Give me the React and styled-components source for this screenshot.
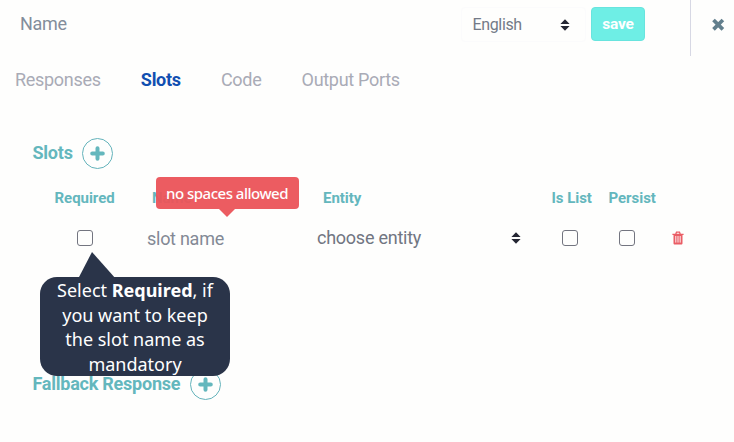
import React from 'react';
import styled, { createGlobalStyle } from 'styled-components';

const GlobalStyle = createGlobalStyle`
  * { box-sizing: border-box; }
  body {
    margin: 0;
    background: #fefefd;
    font-family: Roboto, "Liberation Sans", sans-serif;
    overflow: hidden;
  }
`;

const Page = styled.div`
  width: 734px;
  height: 442px;
  display: flex;
  flex-direction: column;
  background: #fefefd;
`;

const Header = styled.header`
  height: 56px;
  display: flex;
  align-items: flex-start;
  padding-left: 20px;
`;

const NameField = styled.div`
  flex: 1;
  line-height: 48px;
  font-size: 18px;
  letter-spacing: -0.3px;
  color: #838d9b;
`;

const LanguageSelect = styled.div`
  width: 125px;
  height: 35px;
  margin-top: 7px;
  padding: 0 15px 0 10.5px;
  display: flex;
  align-items: center;
  justify-content: space-between;
  border: 1px solid #fbfbfc;
  border-radius: 4px;
  font-size: 16px;
  letter-spacing: -0.35px;
  color: #737a87;

  span { margin-top: -1px; }
`;

const SaveButton = styled.button`
  width: 54px;
  height: 34px;
  margin: 7px 45px 0 5px;
  padding: 0;
  border: 1px solid #68e4de;
  border-radius: 4px;
  background: #6eeee5;
  color: #fff;
  font: 700 15.5px Roboto, sans-serif;
  letter-spacing: -0.2px;
`;

const CloseArea = styled.div`
  width: 44px;
  height: 56px;
  padding: 17px 0 0 20px;
  border-left: 1px solid #d7d8e4;
`;

const Tabs = styled.nav`
  height: 48px;
  padding-left: 15px;
  display: flex;
  align-items: center;
  gap: 40.2px;
`;

const Tab = styled.span`
  font-size: 18px;
  letter-spacing: -0.3px;
  line-height: 24px;
  font-weight: ${p => (p.$active ? 700 : 400)};
  color: ${p => (p.$active ? '#114fb1' : '#a9abb6')};
`;

const Section = styled.section`
  padding-left: 32.5px;
  margin-top: ${p => p.$top}px;
`;

const SectionTitle = styled.h2`
  margin: 0;
  height: 31px;
  display: flex;
  align-items: center;
  gap: 9.8px;
  font-size: 18px;
  letter-spacing: -0.24px;
  line-height: 28px;
  font-weight: 700;
  color: #64b7bd;

  span { padding-bottom: 1px; }
`;

const AddButton = styled.button`
  width: 31px;
  height: 31px;
  padding: 0;
  display: grid;
  place-items: center;
  border: 1px solid #64b3bb;
  border-radius: 50%;
  background: transparent;
  color: #64b7bd;
`;

const Row = styled.div`
  display: grid;
  align-items: center;
`;

const LabelRow = styled(Row)`
  grid-template-columns: 97.5px 171px 228.5px 57px 1fr;
  height: 20px;
  margin-top: 19px;
  padding-left: 22px;
`;

const FieldRow = styled(Row)`
  grid-template-columns: 70px 170px 245px 57px 52.5px 1fr;
  height: 24px;
  margin-top: 17px;
  padding-left: 44.5px;
`;

const ColumnLabel = styled.div`
  position: relative;
  font-size: 15px;
  letter-spacing: -0.04px;
  line-height: 20px;
  font-weight: 700;
  color: #64b7bd;
`;

const Checkbox = styled.span`
  width: 16px;
  height: 16px;
  position: relative;
  border: 1px solid #737580;
  border-radius: 3px;
`;

const SlotName = styled.div`
  font-size: 18px;
  letter-spacing: -0.27px;
  line-height: 24px;
  margin-top: 2px;
  color: #838995;
`;

const EntitySelect = styled.div`
  width: 204px;
  display: flex;
  align-items: center;
  justify-content: space-between;
  font-size: 18px;
  letter-spacing: -0.25px;
  line-height: 24px;
  color: #717682;
`;

const ErrorTip = styled.div`
  position: absolute;
  left: 3.5px;
  top: -11px;
  width: 143px;
  height: 32px;
  border-radius: 4px;
  background: rgba(235, 83, 88, 0.95);
  color: #fff;
  font: 500 15px/33px "Noto Sans", sans-serif;
  letter-spacing: -0.5px;
  text-align: center;
  white-space: nowrap;

  &::after {
    content: '';
    position: absolute;
    left: 63px;
    top: 32px;
    border: 8px solid transparent;
    border-top-color: rgba(235, 83, 88, 0.95);
    border-bottom: 0;
  }
`;

const Callout = styled.aside`
  position: absolute;
  z-index: 2;
  left: -38px;
  top: 46px;
  width: 190px;
  height: 99px;
  padding-top: 1px;
  border-radius: 17px;
  background: #2a3449;
  color: #fff;
  font: 400 18px/24.6px "Noto Sans", sans-serif;
  text-align: center;
  white-space: nowrap;

  p { margin: 0; }

  svg {
    position: absolute;
    left: 38px;
    top: -25px;
  }
`;

const SortIcon = () => (
  <svg width="10" height="12" viewBox="0 0 10 12" fill="#242633">
    <path d="M5 .3 9.6 5H.4zM.4 7h9.2L5 11.7z" />
  </svg>
);

const PlusIcon = () => (
  <svg width="15" height="15" viewBox="0 0 15 15" fill="none" stroke="currentColor" strokeWidth="4" strokeLinecap="round">
    <path d="M7.5 2.2v10.6M2.2 7.5h10.6" />
  </svg>
);

const CloseIcon = () => (
  <svg width="14" height="14" viewBox="0 0 14 14" fill="none" stroke="#627f8d" strokeWidth="3.7" strokeLinecap="square">
    <path d="M3.8 3.3l6.8 6.8M10.6 3.3l-6.8 6.8" />
  </svg>
);

const TrashIcon = () => (
  <svg width="12" height="14" viewBox="0 0 12 14">
    <path d="M1.5 3.2h9v9c0 .8-.5 1.3-1.3 1.3H2.8c-.8 0-1.3-.5-1.3-1.3z" fill="#ea5d65" />
    <path d="M.4 3.3h11.2M3.8 3l.7-1.9h3L8.2 3" fill="none" stroke="#ea5d65" strokeWidth="1.3" />
    <path d="M3.8 5v6.6M6 5v6.6M8.2 5v6.6" stroke="#fff" strokeWidth=".9" />
  </svg>
);

export default function App() {
  return (
    <>
      <GlobalStyle />
      <Page>
        <Header>
          <NameField>Name</NameField>
          <LanguageSelect><span>English</span><SortIcon /></LanguageSelect>
          <SaveButton>save</SaveButton>
          <CloseArea><CloseIcon /></CloseArea>
        </Header>
        <Tabs>
          <Tab>Responses</Tab>
          <Tab $active>Slots</Tab>
          <Tab>Code</Tab>
          <Tab>Output Ports</Tab>
        </Tabs>
        <Section $top={34}>
          <SectionTitle>
            <span>Slots</span>
            <AddButton aria-label="Add slot"><PlusIcon /></AddButton>
          </SectionTitle>
          <LabelRow>
            <ColumnLabel>Required</ColumnLabel>
            <ColumnLabel>
              Name
              <ErrorTip>no spaces allowed</ErrorTip>
            </ColumnLabel>
            <ColumnLabel>Entity</ColumnLabel>
            <ColumnLabel>Is List</ColumnLabel>
            <ColumnLabel>Persist</ColumnLabel>
          </LabelRow>
          <FieldRow>
            <Checkbox>
              <Callout>
                <svg width="40" height="27" viewBox="0 0 40 27" fill="#2a3449">
                  <path d="M14 0 38 27H0z" />
                </svg>
                <p>Select <b>Required</b>, if</p>
                <p>you want to keep</p>
                <p>the slot name as</p>
                <p>mandatory</p>
              </Callout>
            </Checkbox>
            <SlotName>slot name</SlotName>
            <EntitySelect><span>choose entity</span><SortIcon /></EntitySelect>
            <Checkbox />
            <Checkbox />
            <TrashIcon />
          </FieldRow>
        </Section>
        <Section $top={120}>
          <SectionTitle>
            <span>Fallback Response</span>
            <AddButton aria-label="Add fallback response"><PlusIcon /></AddButton>
          </SectionTitle>
        </Section>
      </Page>
    </>
  );
}
